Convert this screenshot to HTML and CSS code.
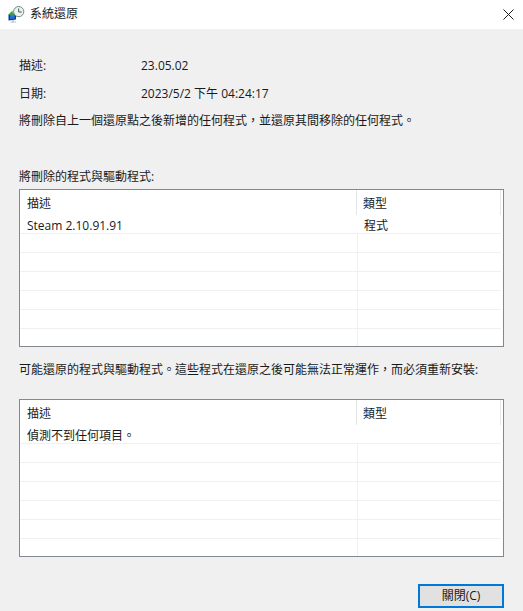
FILE: index.html
```html
<!DOCTYPE html>
<html lang="zh-Hant">
<head>
<meta charset="utf-8">
<title>系統還原</title>
<link rel="stylesheet" href="styles.css">
</head>
<body>
<div class="dialog">
  <header class="titlebar">
    <svg class="app-icon" width="17" height="17" viewBox="0 0 17 17">
      <path d="M0.5 8.5 L8 6.5 V13.5 L0.5 14.5 Z" fill="#16318f"/>
      <path d="M2 9.5 L6.8 8.2 V12.6 L2 13.2 Z" fill="#1c6fe0"/>
      <path d="M4.3 14.2 h1.6 v1.3 h-1.6 z" fill="#9aa6b2"/>
      <path d="M2.5 15.5 h5.5 v1 h-5.5 z" fill="#b5bdc6"/>
      <path d="M0.5 8.5 L4.5 4.5 L4.8 7 L7.5 6.5 L4.8 10.5 Z" fill="#3aa03f"/>
      <circle cx="10.7" cy="5.6" r="5.1" fill="#eef3f2" stroke="#6f8a80" stroke-width="1"/>
      <path d="M10.7 2.5 V6 H13.8" fill="none" stroke="#3f5a52" stroke-width="1"/>
    </svg>
    <span class="title">系統還原</span>
    <svg class="close" width="11" height="11" viewBox="0 0 11 11">
      <path d="M0.5 0.5 L10.5 10.5 M10.5 0.5 L0.5 10.5" stroke="#1a1a1a" stroke-width="1" fill="none"/>
    </svg>
  </header>
  <main class="content">
    <dl class="info">
      <div class="info-row"><dt>描述:</dt><dd>23.05.02</dd></div>
      <div class="info-row"><dt>日期:</dt><dd>2023/5/2 下午 04:24:17</dd></div>
    </dl>
    <p class="summary">將刪除自上一個還原點之後新增的任何程式，並還原其間移除的任何程式。</p>
    <p class="label label-first">將刪除的程式與驅動程式:</p>
    <div class="list">
      <div class="head"><span class="c1">描述</span><span class="c2">類型</span></div>
      <div class="row row-first"><span class="c1">Steam 2.10.91.91</span><span class="c2">程式</span></div>
      <div class="row"></div><div class="row"></div><div class="row"></div><div class="row"></div><div class="row"></div><div class="row row-last"></div>
    </div>
    <p class="label label-second">可能還原的程式與驅動程式。這些程式在還原之後可能無法正常運作，而必須重新安裝:</p>
    <div class="list">
      <div class="head"><span class="c1">描述</span><span class="c2">類型</span></div>
      <div class="row row-first"><span class="c1">偵測不到任何項目。</span><span class="c2"></span></div>
      <div class="row"></div><div class="row"></div><div class="row"></div><div class="row"></div><div class="row"></div><div class="row row-last"></div>
    </div>
    <footer class="actions"><button class="btn" type="button">關閉(C)</button></footer>
  </main>
</div>
</body>
</html>
```
FILE: styles.css
```css
* { box-sizing: border-box; }
html, body { margin: 0; padding: 0; }
body {
  width: 523px;
  height: 611px;
  overflow: hidden;
  background: #f0f0f0;
  color: #1a1a1a;
  font: 12px/16px "Open Sans", "Noto Sans CJK TC", sans-serif;
}
.dialog { display: flex; flex-direction: column; height: 611px; }
.titlebar {
  height: 29px;
  background: #fff;
  display: flex;
  align-items: center;
  padding: 0 9px 0 8px;
  flex: none;
}
.app-icon { margin-top: -1px; }
.title { margin-left: 5px; margin-top: -1px; }
.close { margin-left: auto; }
.content { padding: 29px 19px 0; display: flex; flex-direction: column; }
.info { margin: 0; display: flex; flex-direction: column; gap: 12px; }
.info-row { display: flex; }
.info-row dt { width: 122px; }
.info-row dd { margin: 0; }
.summary { margin: 11px 0 0; }
.label { margin: 0; }
.label-first { margin-top: 40px; }
.label-second { margin-top: 15px; }
.list {
  width: 485px;
  height: 158px;
  background: #fff;
  border: 1px solid #828790;
  padding-right: 2px;
  overflow: hidden;
  flex: none;
}
.label-first + .list { margin-top: 4px; }
.label-second + .list { margin-top: 21px; }
.head {
  display: flex;
  height: 25px;
  align-items: center;
}
.c1 { width: 337px; padding-left: 7px; }
.c2 { padding-left: 7px; }
.head .c1, .head .c2 { height: 100%; display: flex; align-items: center; padding-top: 3px; }
.head .c1 { border-right: 1px solid #e5e5e5; width: 337px; margin-right: 0; }
.head .c2 { width: 144px; border-right: 1px solid #e5e5e5; padding-left: 6px; }
.row {
  height: 19px;
  display: flex;
  align-items: center;
  border-bottom: 1px solid #f0f0f0;
  background: linear-gradient(#f0f0f0, #f0f0f0) 337px 0 / 1px 100% no-repeat;
}
.row-first { background: none; padding-top: 4px; }
.row-last { border-bottom: 0; }
.actions { display: flex; justify-content: flex-end; margin-top: 27px; }
.btn {
  width: 86px;
  height: 24px;
  background: #e1e1e1;
  border: 2px solid #0078d7;
  color: #1a1a1a;
  font: inherit;
  padding: 0;
}
```
